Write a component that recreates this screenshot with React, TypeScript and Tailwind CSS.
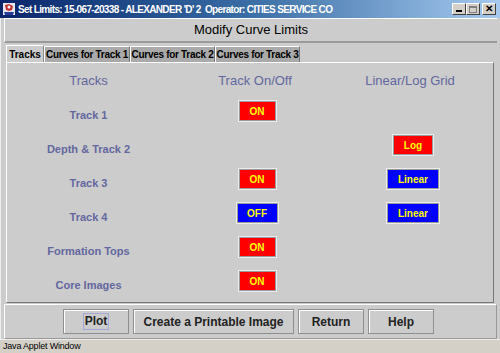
import React from "react";

const labelCls =
  "text-[11px] font-bold text-[#63679f] flex items-center justify-center h-full";

function ToggleBtn({ text, color, w }: { text: string; color: "red" | "blue"; w: string }) {
  return (
    <div
      className={`${w} h-[20px] ${
        color === "red" ? "bg-[#ff0000]" : "bg-[#0000ff]"
      } border border-[#9a9a9a] shadow-[0_0_0_1px_#ececec] flex items-center justify-center text-[10px] font-bold text-[#ffff00]`}
    >
      {text}
    </div>
  );
}

function Row({
  label,
  onoff,
  grid,
}: {
  label: string;
  onoff?: React.ReactNode;
  grid?: React.ReactNode;
}) {
  return (
    <div className="grid grid-cols-[163px_174px_138px] h-[34px]">
      <div className={labelCls}>{label}</div>
      <div className="flex justify-center pt-[3px]">{onoff}</div>
      <div className="flex justify-center pt-[3px]">{grid}</div>
    </div>
  );
}

function BottomBtn({ text, w, focus }: { text: string; w: string; focus?: boolean }) {
  return (
    <div
      className={`${w} h-[25px] border border-[#8f8f8f] shadow-[inset_1px_1px_0_#ffffff] bg-[#cccccc] flex items-center justify-center text-[12px] font-bold text-[#222222]`}
    >
      {focus ? (
        <span className="border border-[#a3a8d8] px-[1px] leading-[15px]">{text}</span>
      ) : (
        text
      )}
    </div>
  );
}

function Tab({ text, w }: { text: string; w: string }) {
  return (
    <div
      className={`h-[16px] ${w} flex items-center justify-center whitespace-nowrap text-[10px] tracking-[-0.3px] font-bold text-black bg-[#aaaaaa] border border-b-0 border-white border-r-[#777]`}
    >
      {text}
    </div>
  );
}

export default function App() {
  return (
    <div
      className="w-[500px] h-[353px] bg-[#cccccc] flex flex-col overflow-hidden"
      style={{ fontFamily: '"Liberation Sans", Arial, sans-serif' }}
    >
      {/* title bar */}
      <div className="h-[18px] flex items-center bg-gradient-to-r from-[#0a246a] via-[#3a6ea5] to-[#a6caf0] pl-[2px] pr-[4px] shrink-0">
        <svg width="14" height="14" viewBox="0 0 14 14" className="shrink-0">
          <rect x="1" y="1" width="12" height="12" fill="#e8e8f0" />
          <path d="M3 3 L7 2 L11 4 L10 8 L7 9 L4 8 Z" fill="#c43030" />
          <path d="M2 10 L12 10 L11 13 L3 13 Z" fill="#2a3a9a" />
          <circle cx="7" cy="5" r="1.5" fill="#ffffff" />
        </svg>
        <span className="ml-[2px] text-white text-[10px] font-bold whitespace-nowrap tracking-[-0.65px]">
          Set Limits: 15-067-20338 - ALEXANDER 'D' 2&nbsp;&nbsp;Operator: CITIES SERVICE CO
        </span>
        <div className="ml-auto flex items-center">
          <div className="w-[14px] h-[12px] bg-[#d4d0c8] border border-t-white border-l-white border-b-[#404040] border-r-[#404040] flex items-end justify-center pb-[2px]">
            <div className="w-[6px] h-[2px] bg-black" />
          </div>
          <div className="w-[14px] h-[12px] bg-[#d4d0c8] border border-t-white border-l-white border-b-[#404040] border-r-[#404040] flex items-center justify-center">
            <div className="w-[8px] h-[7px] border border-[#808080] border-t-2" />
          </div>
          <div className="ml-[2px] w-[14px] h-[12px] bg-[#d4d0c8] border border-t-white border-l-white border-b-[#404040] border-r-[#404040] flex items-center justify-center text-[10px] font-bold leading-none text-black">
            ✕
          </div>
        </div>
      </div>

      {/* window body */}
      <div className="flex-1 flex flex-col px-[3px] border-l border-[#eeeeee]">
        {/* header */}
        <div className="h-[25px] border-l border-t border-white border-b-2 border-b-[#9a9a9a] flex items-center justify-center text-[13px] text-black shrink-0">
          Modify Curve Limits
        </div>

        {/* tabs */}
        <div className="flex items-end h-[18px] mt-[1px] pl-[2px] shrink-0">
          <div className="h-[17px] w-[38px] flex items-center justify-center whitespace-nowrap text-[10px] font-bold text-black bg-[#cccccc] border border-b-0 border-white border-r-[#888] z-10">
            Tracks
          </div>
          <Tab text="Curves for Track 1" w="w-[86px]" />
          <Tab text="Curves for Track 2" w="w-[85px]" />
          <Tab text="Curves for Track 3" w="w-[85px]" />
        </div>

        {/* tab panel */}
        <div className="h-[241px] ml-[2px] mr-[3px] border border-t-white border-l-white border-r-[#777] border-b-[#777] flex flex-col shrink-0">
          <div className="grid grid-cols-[163px_170px_140px] h-[34px] mt-[1px] text-[13px] text-[#63679f] items-center">
            <div className="text-center">Tracks</div>
            <div className="text-center">Track On/Off</div>
            <div className="text-center">Linear/Log Grid</div>
          </div>
          <Row label="Track 1" onoff={<ToggleBtn text="ON" color="red" w="w-[37px]" />} />
          <Row label="Depth & Track 2" grid={<ToggleBtn text="Log" color="red" w="w-[40px]" />} />
          <Row
            label="Track 3"
            onoff={<ToggleBtn text="ON" color="red" w="w-[37px]" />}
            grid={<ToggleBtn text="Linear" color="blue" w="w-[52px]" />}
          />
          <Row
            label="Track 4"
            onoff={<ToggleBtn text="OFF" color="blue" w="w-[41px]" />}
            grid={<ToggleBtn text="Linear" color="blue" w="w-[52px]" />}
          />
          <Row label="Formation Tops" onoff={<ToggleBtn text="ON" color="red" w="w-[37px]" />} />
          <Row label="Core Images" onoff={<ToggleBtn text="ON" color="red" w="w-[37px]" />} />
        </div>

        {/* bottom buttons */}
        <div className="h-[35px] mt-[1px] border border-white border-r-[#999] border-b-[#999] flex items-center justify-center gap-[4px] pr-[4px] shrink-0">
          <BottomBtn text="Plot" w="w-[66px]" focus />
          <BottomBtn text="Create a Printable Image" w="w-[161px]" />
          <BottomBtn text="Return" w="w-[66px]" />
          <BottomBtn text="Help" w="w-[66px]" />
        </div>
      </div>

      {/* status bar */}
      <div className="h-[15px] bg-[#d4d0c8] border-t border-[#eeeeee] flex items-center pl-[3px] text-[9px] tracking-[-0.2px] text-black shrink-0">
        Java Applet Window
      </div>
    </div>
  );
}
